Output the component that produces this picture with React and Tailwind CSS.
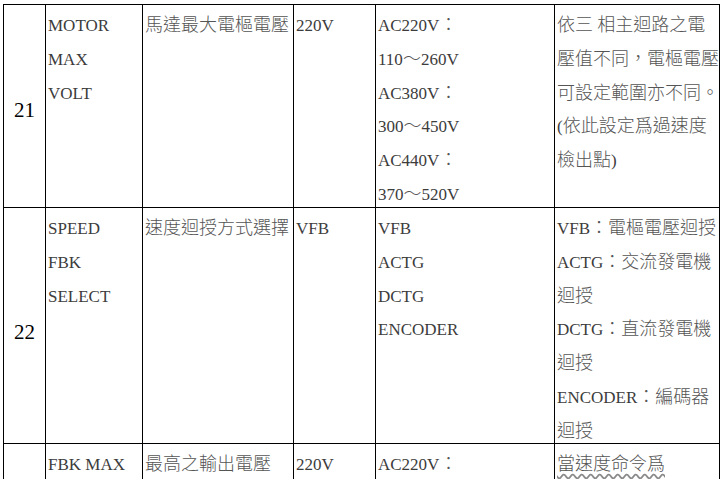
const CJK = /([\u3000-\u9fff\uff00-\uffef]+)/

function T({ s }) {
  return s.split(CJK).map((p, i) =>
    CJK.test(p) ? <span key={i} className="text-[18px] font-light text-[#555]">{p}</span> : p
  )
}

const cols = ['w-[42px]', 'w-[97px]', 'w-[151px]', 'w-[82px]', 'w-[179px]', 'w-[166px] border-r']

const rows = [
  {
    h: 'h-[203px]',
    no: '21',
    pt: 'pt-[10px]',
    cells: [
      ['MOTOR', 'MAX', 'VOLT'],
      ['馬達最大電樞電壓'],
      ['220V'],
      ['AC220V：', '110～260V', 'AC380V：', '300～450V', 'AC440V：', '370～520V'],
      ['依三 相主迴路之電', '壓值不同，電樞電壓', '可設定範圍亦不同。', '(依此設定爲過速度', '檢出點)'],
    ],
  },
  {
    h: 'h-[236px]',
    no: '22',
    pt: 'pt-[14px]',
    cells: [
      ['SPEED', 'FBK', 'SELECT'],
      ['速度迴授方式選擇'],
      ['VFB'],
      ['VFB', 'ACTG', 'DCTG', 'ENCODER'],
      ['VFB：電樞電壓迴授', 'ACTG：交流發電機', '迴授', 'DCTG：直流發電機', '迴授', 'ENCODER：編碼器', '迴授'],
    ],
  },
]

export default function App() {
  return (
    <div
      className="w-[723px] h-[479px] overflow-hidden bg-white pt-[4px] pl-[3px] text-[17px] text-[#3c3c3c]"
      style={{ fontFamily: '"Liberation Serif", "Noto Sans CJK TC", serif' }}
    >
      {rows.map(r => (
        <div key={r.no} className={`flex ${r.h}`}>
          <div className={`${cols[0]} ${r.pt} border-l border-t border-black flex items-center justify-center text-[21px] text-black`}>
            {r.no}
          </div>
          {r.cells.map((lines, ci) => (
            <div key={ci} className={`${cols[ci + 1]} border-l border-t border-black pt-[4px] pl-[2px] leading-[33.8px] whitespace-nowrap`}>
              {lines.map((l, li) => (
                <div key={li}><T s={l} /></div>
              ))}
            </div>
          ))}
        </div>
      ))}

      <div className="flex h-[120px]">
        <div className={`${cols[0]} border-l border-t border-black`} />
        <div className={`${cols[1]} border-l border-t border-black pt-[4px] pl-[2px] leading-[33.8px] whitespace-nowrap`}>FBK MAX</div>
        <div className={`${cols[2]} border-l border-t border-black pt-[4px] pl-[2px] leading-[33.8px] whitespace-nowrap`}>
          <T s="最高之輸出電壓" />
        </div>
        <div className={`${cols[3]} border-l border-t border-black pt-[4px] pl-[2px] leading-[33.8px]`}>220V</div>
        <div className={`${cols[4]} border-l border-t border-black pt-[4px] pl-[2px] leading-[33.8px] whitespace-nowrap`}>
          <T s="AC220V：" />
        </div>
        <div className={`${cols[5]} border-l border-t border-black pt-[4px] pl-[2px] leading-[33.8px] whitespace-nowrap`}>
          <span className="text-[18px] font-light text-[#555] underline decoration-wavy decoration-[#8a8a8a] underline-offset-[3px]">當速度命令爲</span>
        </div>
      </div>
    </div>
  )
}
